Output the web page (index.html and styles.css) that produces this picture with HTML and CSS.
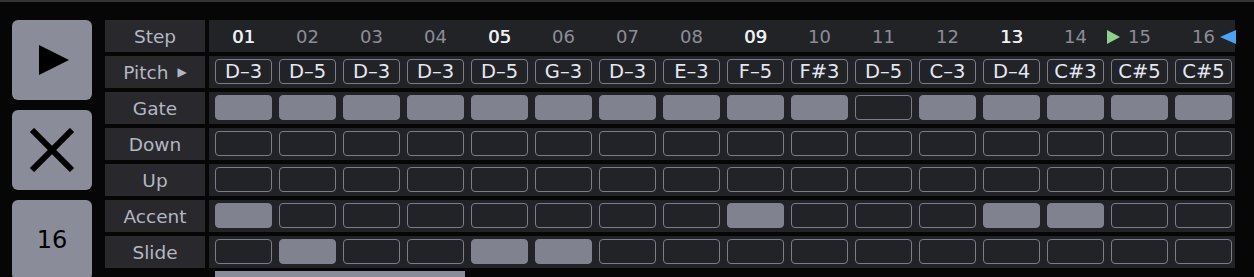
FILE: index.html
```html
<!DOCTYPE html>
<html lang="en">
<head>
    <meta charset="UTF-8">
    <title>Step Sequencer</title>
    <link rel="stylesheet" href="styles.css">
</head>
<body>
    <div class="app">
        <div class="controls">
            <button class="ctl">
                <svg width="30" height="30" viewBox="0 0 30 30"><polygon points="0,0 30,15 0,30" fill="#000"/></svg>
            </button>
            <button class="ctl">
                <svg width="46" height="44" viewBox="0 0 46 44"><path d="M3 2 L43 42 M43 2 L3 42" stroke="#000" stroke-width="6"/></svg>
            </button>
            <button class="ctl num">16</button>
        </div>

        <div class="seq">
            <div class="label">Step</div>
            <div class="row steps">
                <span class="beat">01</span><span>02</span><span>03</span><span>04</span>
                <span class="beat">05</span><span>06</span><span>07</span><span>08</span>
                <span class="beat">09</span><span>10</span><span>11</span><span>12</span>
                <span class="beat">13</span><span>14</span><span class="loop-start">15</span><span class="loop-end">16</span>
            </div>

            <div class="label">Pitch <span class="arrow">&#9654;</span></div>
            <div class="row pitches">
                <span>D&ndash;3</span><span>D&ndash;5</span><span>D&ndash;3</span><span>D&ndash;3</span>
                <span>D&ndash;5</span><span>G&ndash;3</span><span>D&ndash;3</span><span>E&ndash;3</span>
                <span>F&ndash;5</span><span>F#3</span><span>D&ndash;5</span><span>C&ndash;3</span>
                <span>D&ndash;4</span><span>C#3</span><span>C#5</span><span>C#5</span>
            </div>

            <div class="label">Gate</div>
            <div class="row" id="gate"></div>
            <div class="label">Down</div>
            <div class="row" id="down"></div>
            <div class="label">Up</div>
            <div class="row" id="up"></div>
            <div class="label">Accent</div>
            <div class="row" id="accent"></div>
            <div class="label">Slide</div>
            <div class="row" id="slide"></div>

            <div class="scroll"><div class="thumb"></div></div>
        </div>
    </div>

    <script>
        // which steps are switched on, per row
        const pattern = {
            gate:   [1,1,1,1,1,1,1,1,1,1,0,1,1,1,1,1],
            down:   [0,0,0,0,0,0,0,0,0,0,0,0,0,0,0,0],
            up:     [0,0,0,0,0,0,0,0,0,0,0,0,0,0,0,0],
            accent: [1,0,0,0,0,0,0,0,1,0,0,0,1,1,0,0],
            slide:  [0,1,0,0,1,1,0,0,0,0,0,0,0,0,0,0]
        };
        for (const name in pattern) {
            const row = document.getElementById(name);
            row.innerHTML = pattern[name]
                .map(on => `<span class="cell${on ? ' on' : ''}"></span>`)
                .join('');
        }
    </script>
</body>
</html>
```

FILE: styles.css
```css
body {
    margin: 0;
    background: #060606;
    border-top: 2px solid #343436;
    font-family: "DejaVu Sans", sans-serif;
    font-size: 18px;
    height: 275px;
    overflow: hidden;
}
.app {
    display: flex;
    height: 275px;
    box-sizing: border-box;
    overflow: hidden;
    padding: 18px 0 0 12px;
    gap: 13px;
}
.controls {
    display: flex;
    flex-direction: column;
    gap: 10px;
}
.ctl {
    width: 80px;
    height: 80px;
    flex-shrink: 0;
    padding: 0;
    border: none;
    border-radius: 6px;
    background: #8a8d99;
    display: flex;
    align-items: center;
    justify-content: center;
    font-family: "DejaVu Sans", sans-serif;
    font-size: 24px;
    color: #000;
}
.ctl svg {
    display: block;
}
.ctl:first-child svg {
    margin-left: 4px;
}
.seq {
    display: grid;
    grid-template-columns: 100px 1026px;
    grid-auto-rows: 32px;
    gap: 4px;
}
.label {
    background: #29292d;
    color: #b3b6c3;
    display: flex;
    align-items: center;
    justify-content: center;
    font-size: 18.5px;
}
.arrow {
    font-size: 12px;
    margin-left: 9px;
    color: #b3b6c3;
}
.row {
    background: #222327;
    display: grid;
    grid-template-columns: repeat(16, 57px);
    column-gap: 7px;
    padding: 3px 0 0 6px;
    box-sizing: border-box;
    align-content: start;
}
.steps {
    padding-top: 2px;
}
.steps span {
    text-align: center;
    color: #8b8e99;
    position: relative;
    line-height: 30px;
}
.steps .beat {
    color: #eef0f6;
    text-shadow: 0.5px 0 0 #eef0f6;
}
.loop-start::before {
    content: "";
    position: absolute;
    left: -4px;
    top: 8px;
    border-left: 13px solid #8fd08d;
    border-top: 7px solid transparent;
    border-bottom: 7px solid transparent;
}
.loop-end::after {
    content: "";
    position: absolute;
    right: -4px;
    top: 8px;
    border-right: 16px solid #4aa3f5;
    border-top: 7px solid transparent;
    border-bottom: 7px solid transparent;
}
.pitches span {
    height: 25px;
    box-sizing: border-box;
    border: 1.5px solid #7b7e89;
    border-radius: 4px;
    color: #e4e7f3;
    display: flex;
    align-items: center;
    justify-content: center;
    font-size: 19.5px;
    line-height: 1;
}
.cell {
    height: 25px;
    box-sizing: border-box;
    border: 1.5px solid #7b7e89;
    border-radius: 4px;
    background: #222327;
}
.cell.on {
    background: #80838f;
    border-color: #80838f;
}
.scroll {
    grid-column: 2;
    height: 8px;
    margin-top: -1px;
    padding-left: 6px;
}
.thumb {
    width: 250px;
    height: 8px;
    background: #8a8d99;
}
```
